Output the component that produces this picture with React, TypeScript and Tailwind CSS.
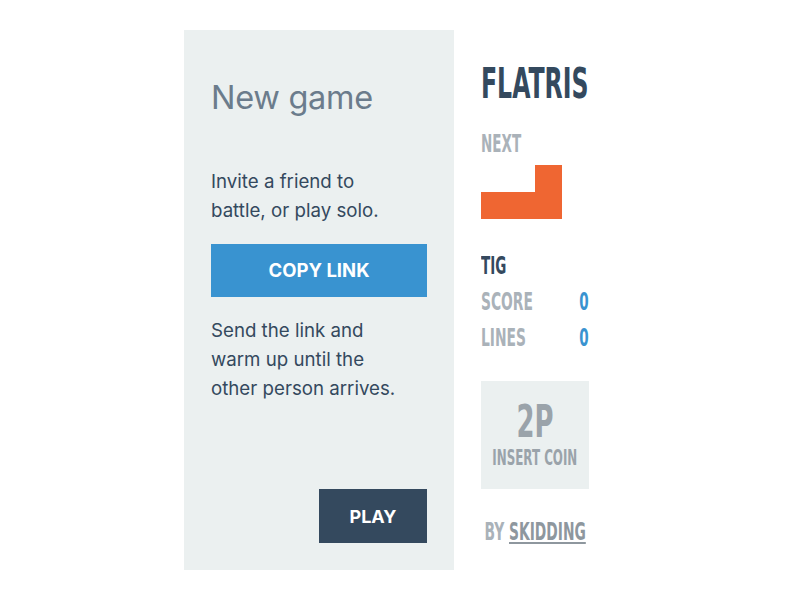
const teko = {
  fontFamily: '"Liberation Sans Narrow", "DejaVu Sans Condensed", "Liberation Sans", sans-serif',
};

function Cond({
  children,
  className = "",
  right = false,
}: {
  children: React.ReactNode;
  className?: string;
  right?: boolean;
}) {
  return (
    <span
      className={`inline-block whitespace-nowrap ${right ? "origin-right" : "origin-left"} ${className}`}
    >
      {children}
    </span>
  );
}

function NewGamePanel() {
  return (
    <div
      className="w-[270px] h-[540px] bg-[#ebf0f0] px-[27px] pb-[27px] pt-[48px] flex flex-col"
      style={{ fontFamily: 'Inter, "Liberation Sans", sans-serif' }}
    >
      <h2 className="text-[32.5px] leading-[40px] text-[#6b7c8c] font-normal tracking-[-0.3px]">New game</h2>
      <p className="mt-[49px] text-[18.7px] leading-[29px] text-[#34495e]">
        Invite a friend to
        <br />
        battle, or play solo.
      </p>
      <button className="mt-[19px] h-[53px] w-full bg-[#3993d0] text-white font-bold text-[18.5px]">
        COPY LINK
      </button>
      <p className="mt-[19px] text-[18.7px] leading-[29px] text-[#34495e]">
        Send the link and
        <br />
        warm up until the
        <br />
        other person arrives.
      </p>
      <div className="mt-auto flex justify-end">
        <button className="h-[54px] w-[108px] bg-[#34495e] text-white font-bold text-[18px]">PLAY</button>
      </div>
    </div>
  );
}

function NextPiece() {
  return (
    <div className="grid grid-cols-[27px_27px_27px] grid-rows-[27px_27px] w-[81px]">
      <div />
      <div />
      <div className="bg-[#ef6632]" />
      <div className="bg-[#ef6632]" />
      <div className="bg-[#ef6632]" />
      <div className="bg-[#ef6632]" />
    </div>
  );
}

function SidePanel() {
  return (
    <div className="w-[162px] h-[540px] pl-[27px] pr-[27px] flex flex-col font-bold" style={teko}>
      <div className="mt-[30px] h-[46px] leading-[46px] text-[43px] text-[#34495e]">
        <Cond className="scale-x-[0.61]">FLATRIS</Cond>
      </div>
      <div className="mt-[25px] h-[26px] leading-[26px] text-[25px] text-[#aab2b9]">
        <Cond className="scale-x-[0.6]">NEXT</Cond>
      </div>
      <div className="mt-[8px]">
        <NextPiece />
      </div>
      <div className="mt-[34px] h-[26px] leading-[26px] text-[25px] text-[#34495e]">
        <Cond className="scale-x-[0.6]">TIG</Cond>
      </div>
      <div className="mt-[10px] h-[26px] leading-[26px] text-[25px] flex justify-between">
        <span className="text-[#aab2b9]">
          <Cond className="scale-x-[0.615]">SCORE</Cond>
        </span>
        <span className="text-[#3993d0]">
          <Cond right className="scale-x-[0.6]">0</Cond>
        </span>
      </div>
      <div className="mt-[10px] h-[26px] leading-[26px] text-[25px] flex justify-between">
        <span className="text-[#aab2b9]">
          <Cond className="scale-x-[0.615]">LINES</Cond>
        </span>
        <span className="text-[#3993d0]">
          <Cond right className="scale-x-[0.6]">0</Cond>
        </span>
      </div>
      <div className="mt-[30px] h-[108px] w-[108px] bg-[#ebf0f0] flex flex-col items-center justify-center text-[#9aa3aa]">
        <div className="h-[44px] leading-[44px] text-[45px] flex justify-center w-full">
          <span className="inline-block whitespace-nowrap scale-x-[0.64] origin-center">2P</span>
        </div>
        <div className="h-[24px] leading-[24px] text-[22px] mt-[2px] flex justify-center w-full">
          <span className="inline-block whitespace-nowrap scale-x-[0.6] origin-center">INSERT COIN</span>
        </div>
      </div>
      <div className="mt-[30px] h-[26px] leading-[26px] text-[24px] text-[#aab2b9] w-[108px] flex justify-center">
        <span className="inline-block whitespace-nowrap scale-x-[0.64] origin-center">
          BY <span className="underline decoration-2 underline-offset-2 text-[#8e979e]">SKIDDING</span>
        </span>
      </div>
    </div>
  );
}

export default function App() {
  return (
    <div className="w-[800px] h-[600px] bg-white flex items-center justify-center">
      <div className="flex w-[432px]">
        <NewGamePanel />
        <SidePanel />
      </div>
    </div>
  );
}
